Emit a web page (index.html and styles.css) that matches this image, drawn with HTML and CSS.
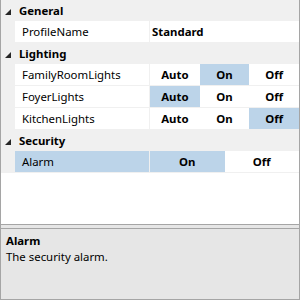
FILE: index.html
```html
<!DOCTYPE html>
<html lang="en">
  <head>
    <meta charset="UTF-8" />
    <title>Property Grid</title>
    <link rel="stylesheet" href="styles.css">
  </head>
  <body>
    <div class="grid">
      <!-- General -->
      <div class="category">
        <span class="expander">
          <svg width="6" height="6" viewBox="0 0 6 6"><polygon points="6,0 6,6 0,6" /></svg>
        </span>
        <span class="cat-name">General</span>
      </div>
      <div class="prop">
        <div class="name">ProfileName</div>
        <div class="value text">Standard</div>
      </div>

      <!-- Lighting -->
      <div class="category">
        <span class="expander">
          <svg width="6" height="6" viewBox="0 0 6 6"><polygon points="6,0 6,6 0,6" /></svg>
        </span>
        <span class="cat-name">Lighting</span>
      </div>
      <div class="prop">
        <div class="name">FamilyRoomLights</div>
        <div class="value">
          <span class="seg">Auto</span>
          <span class="seg selected">On</span>
          <span class="seg">Off</span>
        </div>
      </div>
      <div class="prop">
        <div class="name">FoyerLights</div>
        <div class="value">
          <span class="seg selected">Auto</span>
          <span class="seg">On</span>
          <span class="seg">Off</span>
        </div>
      </div>
      <div class="prop">
        <div class="name">KitchenLights</div>
        <div class="value">
          <span class="seg">Auto</span>
          <span class="seg">On</span>
          <span class="seg selected">Off</span>
        </div>
      </div>

      <!-- Security -->
      <div class="category">
        <span class="expander">
          <svg width="6" height="6" viewBox="0 0 6 6"><polygon points="6,0 6,6 0,6" /></svg>
        </span>
        <span class="cat-name">Security</span>
      </div>
      <div class="prop active">
        <div class="name">Alarm</div>
        <div class="value">
          <span class="seg selected">On</span>
          <span class="seg">Off</span>
        </div>
      </div>
    </div>

    <div class="splitter"></div>

    <div class="desc">
      <div class="desc-title">Alarm</div>
      <div class="desc-text">The security alarm.</div>
    </div>
  </body>
</html>
```

FILE: styles.css
```css
body {
  margin: 0;
  width: 300px;
  height: 300px;
  font-family: "Noto Sans", "Open Sans", sans-serif;
  font-size: 11.4px;
  color: #000;
  background: #fff;
}
.grid {
  height: 224px;
  background: #fff;
  border-left: 1px solid #a5a5a5;
  border-right: 1px solid #a5a5a5;
  border-bottom: 1px solid #a5a5a5;
}
.category {
  display: flex;
  align-items: center;
  height: 21px;
  background: #f0f0f0;
}
.expander {
  display: flex;
  width: 14px;
  padding-left: 4px;
  box-sizing: border-box;
  margin-top: 3px;
}
.expander svg {
  fill: #262626;
}
.cat-name {
  padding-left: 4px;
  font-weight: bold;
  line-height: 21px;
}
.prop {
  display: flex;
  height: 21px;
  border-bottom: 1px solid #f0f0f0;
  padding-left: 14px;
  background: #f0f0f0;
}
.name {
  width: 134px;
  padding-left: 7px;
  box-sizing: border-box;
  margin-right: 1px;
  background: #fff;
  line-height: 21px;
}
.value {
  display: flex;
  flex: 1;
  background: #fff;
  font-weight: bold;
  line-height: 21px;
}
.value.text {
  padding-left: 2px;
}
.seg {
  flex: 1;
  text-align: center;
}
.seg.selected,
.prop.active .name {
  background: #bcd4e9;
}
.splitter {
  height: 3px;
  background: #e6e6e6;
  border-left: 1px solid #a5a5a5;
  border-right: 1px solid #a5a5a5;
}
.desc {
  height: 70px;
  padding: 4px 5px;
  box-sizing: border-box;
  background: #e6e6e6;
  border: 1px solid #a5a5a5;
  box-sizing: content-box;
  height: 62px;
  line-height: 16px;
}
.desc-title {
  font-weight: bold;
}
```
